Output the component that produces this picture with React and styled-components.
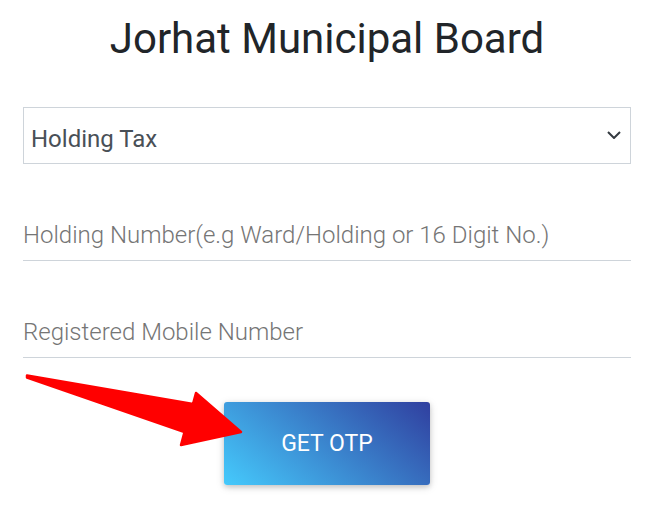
import React from 'react';
import styled, { createGlobalStyle } from 'styled-components';

const GlobalStyle = createGlobalStyle`
  body {
    margin: 0;
    background: #fff;
    font-family: Roboto, "Liberation Sans", sans-serif;
  }
`;

const Page = styled.div`
  position: relative;
  padding: 14px 26px 24px 23px;
`;

const Title = styled.h1`
  margin: 0;
  text-align: center;
  font-size: 42px;
  line-height: 49px;
  font-weight: 400;
  color: #212529;
`;

const Form = styled.form`
  margin-top: 44px;
  display: flex;
  flex-direction: column;
  gap: 53px;
`;

const SelectBox = styled.div`
  height: 57px;
  box-sizing: border-box;
  border: 1px solid #ced4da;
  display: flex;
  align-items: center;
  justify-content: space-between;
  padding: 7px 9px 0 7px;
  font-size: 24px;
  color: #495057;
`;

const Chevron = styled.svg`
  width: 14px;
  height: 8px;
  margin-top: -9px;
  fill: none;
  stroke: #343a40;
  stroke-width: 2;
`;

const TextInput = styled.input`
  display: block;
  width: 100%;
  height: 44px;
  box-sizing: border-box;
  padding: 0 0 8px 0;
  border: none;
  border-bottom: 1px solid #ced4da;
  outline: none;
  background: transparent;
  font-family: Roboto, "Liberation Sans", sans-serif;
  font-size: 24px;
  font-weight: 300;
  color: #495057;

  &::placeholder {
    color: #757575;
  }
`;

const Actions = styled.div`
  margin-top: 44px;
  display: flex;
  justify-content: center;
`;

const OtpButton = styled.button`
  width: 206px;
  height: 83px;
  border: none;
  border-radius: 3px;
  background: linear-gradient(40deg, #45cafc, #303f9f);
  box-shadow: 0 2px 5px 0 rgba(0, 0, 0, 0.16), 0 2px 10px 0 rgba(0, 0, 0, 0.12);
  color: #fff;
  font-family: Roboto, "Liberation Sans", sans-serif;
  font-size: 23px;
  font-weight: 400;
  text-transform: uppercase;
  cursor: pointer;
`;

const Pointer = styled.svg`
  position: absolute;
  left: 0;
  top: 0;
  width: 260px;
  height: 460px;
  pointer-events: none;
  overflow: visible;
`;

export default function App() {
  return (
    <>
      <GlobalStyle />
      <Page>
        <Title>Jorhat Municipal Board</Title>
        <Form onSubmit={(e) => e.preventDefault()}>
          <SelectBox>
            <span>Holding Tax</span>
            <Chevron viewBox="0 0 14 8">
              <path d="M1 1 L7 7 L13 1" />
            </Chevron>
          </SelectBox>
          <TextInput placeholder="Holding Number(e.g Ward/Holding or 16 Digit No.)" />
          <TextInput placeholder="Registered Mobile Number" />
        </Form>
        <Actions>
          <OtpButton type="button">Get OTP</OtpButton>
        </Actions>
        <Pointer viewBox="0 0 260 460">
          <path
            d="M27 375.5 L193 404 L196 393 L241 432 L181 445 L184.5 432 L27 377.5 Z"
            fill="#ff0000"
            stroke="#ff0000"
            strokeWidth="2.5"
            strokeLinejoin="round"
          />
        </Pointer>
      </Page>
    </>
  );
}
